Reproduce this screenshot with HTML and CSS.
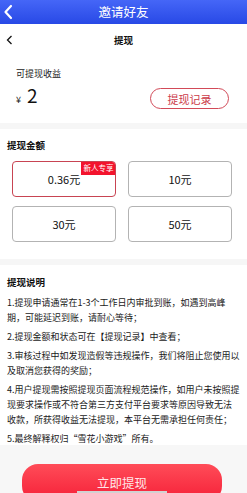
FILE: index.html
```html
<!DOCTYPE html>
<html lang="zh-CN">
<head>
  <meta charset="UTF-8">
  <meta name="viewport" content="width=device-width, initial-scale=1.0">
  <title>提现</title>
  <link rel="stylesheet" href="styles.css">
</head>
<body>
  <header class="topbar">
    <svg class="topbar-back" width="10" height="16" viewBox="0 0 10 16"><path d="M8 2 L2.5 8 L8 14" fill="none" stroke="#fff" stroke-width="2.2" stroke-linecap="round" stroke-linejoin="round"/></svg>
    <span class="topbar-title">邀请好友</span>
  </header>
  <nav class="subbar">
    <svg class="subbar-back" width="7" height="10" viewBox="0 0 7 10"><path d="M5.5 1 L1.5 5 L5.5 9" fill="none" stroke="#111" stroke-width="1.3"/></svg>
    <span class="subbar-title">提现</span>
  </nav>

  <section class="balance">
    <div class="balance-info">
      <div class="balance-label">可提现收益</div>
      <div class="balance-amount"><span class="yen">¥</span><span class="num">2</span></div>
    </div>
    <button class="record-btn">提现记录</button>
  </section>
  <div class="sep"></div>

  <section class="amounts">
    <h3 class="section-title">提现金额</h3>
    <div class="amount-grid">
      <div class="amount-card selected">0.36元<span class="badge">新人专享</span></div>
      <div class="amount-card">10元</div>
      <div class="amount-card">30元</div>
      <div class="amount-card">50元</div>
    </div>
  </section>
  <div class="sep"></div>

  <section class="rules">
    <h3 class="section-title">提现说明</h3>
    <p>1.提现申请通常在1-3个工作日内审批到账，如遇到高峰期，可能延迟到账，请耐心等待；</p>
    <p>2.提现金额和状态可在【提现记录】中查看；</p>
    <p>3.审核过程中如发现造假等违规操作，我们将阻止您使用以及取消您获得的奖励；</p>
    <p>4.用户提现需按照提现页面流程规范操作，如用户未按照提现要求操作或不符合第三方支付平台要求等原因导致无法收款，所获得收益无法提现，本平台无需承担任何责任；</p>
    <p>5.最终解释权归“雪花小游戏”所有。</p>
  </section>

  <footer class="footer">
    <button class="submit-btn">立即提现</button>
    <div class="scroll-hint"></div>
  </footer>
</body>
</html>
```

FILE: styles.css
```css
* { box-sizing: border-box; }
html, body { height: 493px; overflow: hidden; }
body { margin: 0; background: #fff; color: #1a1a1a; font-family: "Noto Sans CJK SC", "Noto Sans", sans-serif; }

.topbar { position: relative; height: 24px; background: linear-gradient(#4566f7, #2849e6); display: flex; justify-content: center; align-items: center; }
.topbar-back { position: absolute; left: 3px; top: 4px; }
.topbar-title { color: #fff; font-size: 12.5px; line-height: 24px; }

.subbar { position: relative; height: 32px; display: flex; justify-content: center; align-items: center; }
.subbar-back { position: absolute; left: 6px; top: 11px; }
.subbar-title { font-size: 9.5px; font-weight: bold; color: #111; }

.sep { height: 6px; background: #f6f6f6; }

.balance { height: 67px; display: flex; justify-content: space-between; align-items: flex-start; padding: 12px 18px 0 16px; }
.balance-label { font-size: 9px; line-height: 12px; color: #222; }
.balance-amount { margin-top: 4px; height: 22px; display: flex; align-items: baseline; }
.yen { font-size: 9px; margin-right: 6px; }
.num { font-size: 19px; line-height: 22px; color: #111; }
.record-btn { margin-top: 20px; width: 79px; height: 21px; border: 1px solid #d24a58; border-radius: 11px; background: #fff; color: #cc3b4a; font-family: inherit; font-size: 11px; padding: 0; }

.section-title { margin: 0; font-size: 9.5px; line-height: 12px; font-weight: bold; color: #111; }

.amounts { height: 130px; padding: 10px 15px 0 12px; }
.amounts .section-title { margin-left: -5px; }
.amount-grid { margin-top: 10px; display: grid; grid-template-columns: 104px 104px; grid-auto-rows: 36px; column-gap: 12px; row-gap: 9px; }
.amount-card { position: relative; border: 1px solid #b3b3b3; border-radius: 4px; display: flex; justify-content: center; align-items: center; font-size: 11px; color: #111; overflow: hidden; }
.amount-card.selected { border-color: #c84452; }
.badge { position: absolute; top: -1px; right: -1px; width: 35px; height: 14px; background: #f3132d; color: #fff; font-size: 7.5px; line-height: 14px; text-align: center; border-top-right-radius: 4px; }

.rules { height: 180px; padding: 11px 7px 0 7px; }
.rules .section-title { margin-bottom: 6.5px; }
.rules p { margin: 0 0 4px; font-size: 9px; line-height: 15px; color: #1a1a1a; }

.footer { position: relative; height: 48px; background: #f7f7f7; padding: 19px 25px 0 22px; overflow: hidden; }
.submit-btn { display: block; width: 100%; height: 38px; border: none; border-radius: 16px; background: linear-gradient(#ff4c58, #f51f37); color: #ffe6e8; font-family: inherit; font-size: 12.5px; line-height: 38px; padding: 0; }
.scroll-hint { position: absolute; left: 77px; bottom: 0; width: 90px; height: 2px; background: #d2d2d2; }
```
